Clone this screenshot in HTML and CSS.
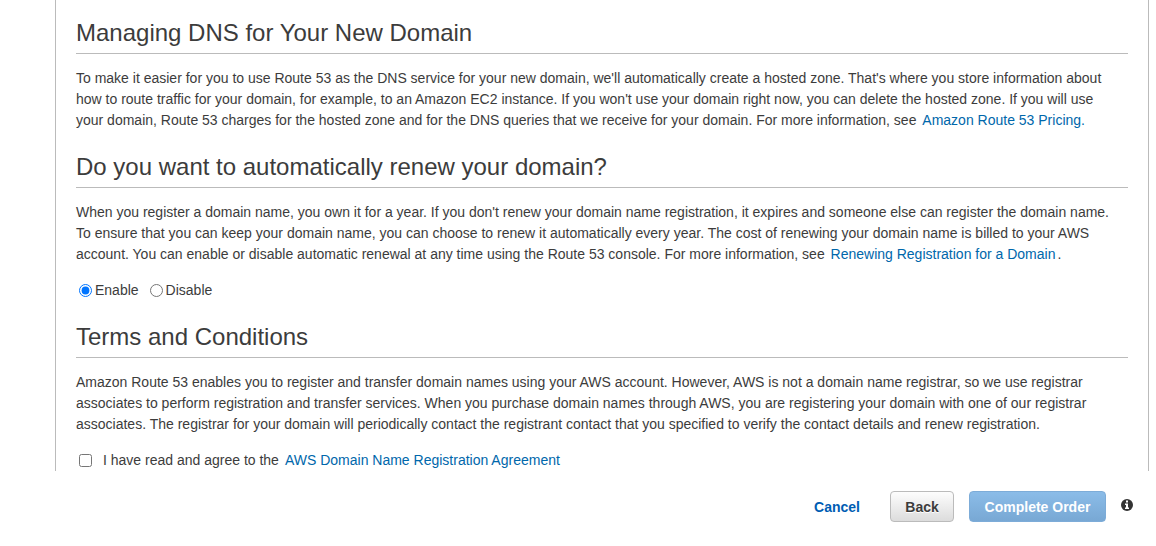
FILE: index.html
```html
<!DOCTYPE html>
<html lang="en">
<head>
<meta charset="utf-8">
<title>Register Domain</title>
<link rel="stylesheet" href="styles.css">
</head>
<body>
<main class="panel">
  <section class="section">
    <h2 class="heading">Managing DNS for Your New Domain</h2>
    <p class="copy">To make it easier for you to use Route 53 as the DNS service for your new domain, we'll automatically create a hosted zone. That's where you store information about<br>how to route traffic for your domain, for example, to an Amazon EC2 instance. If you won't use your domain right now, you can delete the hosted zone. If you will use<br>your domain, Route 53 charges for the hosted zone and for the DNS queries that we receive for your domain. For more information, see <a class="link" href="#">Amazon Route 53 Pricing.</a></p>
  </section>
  <section class="section">
    <h2 class="heading">Do you want to automatically renew your domain?</h2>
    <p class="copy">When you register a domain name, you own it for a year. If you don't renew your domain name registration, it expires and someone else can register the domain name.<br>To ensure that you can keep your domain name, you can choose to renew it automatically every year. The cost of renewing your domain name is billed to your AWS<br>account. You can enable or disable automatic renewal at any time using the Route 53 console. For more information, see <a class="link" href="#">Renewing Registration for a Domain</a>.</p>
    <div class="choices">
      <label class="choice"><input class="radio" type="radio" name="renew" checked>Enable</label>
      <label class="choice"><input class="radio" type="radio" name="renew">Disable</label>
    </div>
  </section>
  <section class="section">
    <h2 class="heading">Terms and Conditions</h2>
    <p class="copy">Amazon Route 53 enables you to register and transfer domain names using your AWS account. However, AWS is not a domain name registrar, so we use registrar<br>associates to perform registration and transfer services. When you purchase domain names through AWS, you are registering your domain with one of our registrar<br>associates. The registrar for your domain will periodically contact the registrant contact that you specified to verify the contact details and renew registration.</p>
    <div class="agree">
      <input class="check" type="checkbox" id="agree">
      <label for="agree">I have read and agree to the</label>
      <a class="link" href="#">AWS Domain Name Registration Agreement</a>
    </div>
  </section>
</main>
<footer class="actions">
  <button class="btn btn-text" type="button">Cancel</button>
  <button class="btn btn-back" type="button">Back</button>
  <button class="btn btn-primary" type="button">Complete Order</button>
  <button class="info" type="button" aria-label="Information">
    <svg width="12" height="12" viewBox="0 0 12 12" aria-hidden="true"><circle cx="6" cy="6" r="6" fill="#333"/><path d="M5 1.5h2v2H5zM4 4.5h3v4h1V10H4V8.500h1V6H4z" fill="#fff"/></svg>
  </button>
</footer>
</body>
</html>
```

FILE: styles.css
```css
* { box-sizing: border-box; }
body {
  margin: 0;
  background: #fff;
  color: #3c3c3c;
  font: 14px/21px "Liberation Sans", Arial, sans-serif;
}
.panel {
  margin: 0 7px 0 55px;
  padding: 13px 20px 0;
  border: solid #bbb;
  border-width: 0 1px;
}
.section + .section { padding-top: 16px; }
.heading {
  margin: 0 0 14px;
  padding: 4px 0;
  border-bottom: 1px solid #bbb;
  font-size: 24px;
  font-weight: 400;
  line-height: 32px;
}
.copy { margin: 0; }
.link { color: #0067ab; text-decoration: none; }
.copy .link { margin: 0 2px; }
.choices, .agree { display: flex; margin-top: 15px; padding-left: 3px; }
.choices { gap: 11px; }
.choice { display: flex; align-items: center; gap: 3px; }
.radio { width: 13px; height: 13px; margin: 0; }
.agree { align-items: center; gap: 6px; }
.check { width: 13px; height: 13px; margin: 0 5px 0 0; }
.actions {
  display: flex;
  justify-content: flex-end;
  align-items: center;
  gap: 15px;
  padding: 20px 23px;
}
.btn {
  height: 31px;
  padding: 1px 14px 0;
  border: 1px solid transparent;
  border-radius: 4px;
  font: bold 14px/21px "Liberation Sans", Arial, sans-serif;
}
.btn-text { background: none; color: #005db3; }
.btn-back {
  min-width: 64px;
  border-color: #bbb;
  background: linear-gradient(#fdfdfd, #dcdcdc);
  color: #3c3c3c;
  text-shadow: 0 1px 0 #fff;
}
.btn-primary {
  min-width: 137px;
  border-color: #7dacd8;
  background: linear-gradient(#8bbce8, #78a8d4);
  color: #fff;
}
.info { display: flex; padding: 0 0 4px; border: 0; background: none; }
```
